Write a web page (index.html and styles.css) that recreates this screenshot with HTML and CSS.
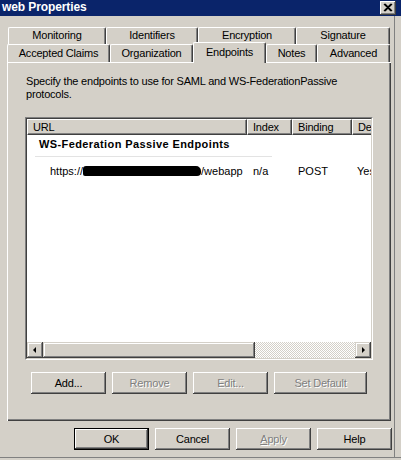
FILE: index.html
```html
<!DOCTYPE html>
<html>
<head>
<meta charset="utf-8">
<title>web Properties</title>
<link rel="stylesheet" href="styles.css">
</head>
<body>
<div class="window">
  <div class="titlebar">
    <span class="title">web Properties</span>
    <span class="close"><svg width="16" height="14" viewBox="0 0 16 14"><path d="M4 3 L11 10 M5 3 L12 10 M11 3 L4 10 M12 3 L5 10" stroke="#000" stroke-width="1.2" fill="none"/></svg></span>
  </div>
  <div class="tabs">
    <div class="tabrow row1">
      <div class="tab t-mon">Monitoring</div>
      <div class="tab t-ide">Identifiers</div>
      <div class="tab t-enc">Encryption</div>
      <div class="tab t-sig">Signature</div>
    </div>
    <div class="tabrow row2">
      <div class="tab t-acc">Accepted Claims</div>
      <div class="tab t-org">Organization</div>
      <div class="tab t-end selected">Endpoints</div>
      <div class="tab t-not">Notes</div>
      <div class="tab t-adv">Advanced</div>
    </div>
  </div>
  <div class="panel">
    <p class="desc">Specify the endpoints to use for SAML and WS-FederationPassive<br>protocols.</p>
    <div class="list">
      <div class="list-in">
        <div class="lv-header">
          <div class="col c-url">URL</div>
          <div class="col c-idx">Index</div>
          <div class="col c-bind">Binding</div>
          <div class="col c-def">Default</div>
        </div>
        <div class="lv-body">
          <div class="group">WS-Federation Passive Endpoints</div>
          <div class="group-line"></div>
          <div class="row">
            <div class="cell c-url url-cell">https://<span class="redact"></span>/webapp</div>
            <div class="cell c-idx">n/a</div>
            <div class="cell c-bind">POST</div>
            <div class="cell c-def">Yes</div>
          </div>
        </div>
        <div class="hscroll">
          <div class="sb-btn"><svg width="14" height="14" viewBox="0 0 14 14"><polygon points="5,7 8,4 8,10" fill="#000"/></svg></div>
          <div class="sb-thumb"></div>
          <div class="sb-track"></div>
          <div class="sb-btn"><svg width="14" height="14" viewBox="0 0 14 14"><polygon points="6,4 9,7 6,10" fill="#000"/></svg></div>
        </div>
      </div>
    </div>
    <div class="btnrow">
      <div class="btn">Add...</div>
      <div class="btn disabled">Remove</div>
      <div class="btn disabled">Edit...</div>
      <div class="btn disabled wide">Set Default</div>
    </div>
  </div>
  <div class="dlg-buttons">
    <div class="btn default">OK</div>
    <div class="btn">Cancel</div>
    <div class="btn disabled"><u>A</u>pply</div>
    <div class="btn">Help</div>
  </div>
</div>
</body>
</html>
```
FILE: styles.css
```css
html, body {
  margin: 0;
  padding: 0;
  background: #d4d0c8;
}
body {
  font-family: "Liberation Sans", Arial, sans-serif;
  font-size: 11px;
  letter-spacing: -0.2px;
  color: #000;
}
.window {
  position: relative;
  width: 401px;
  height: 460px;
  background: #d4d0c8;
  box-sizing: border-box;
  box-shadow: inset 0 -2px #d4d0c8, inset 0 -3px #808080, inset -6px 0 #d4d0c8, inset -7px 0 #808080;
  overflow: hidden;
}
.titlebar {
  display: flex;
  align-items: flex-start;
  height: 16px;
  background: #0a246a;
  color: #fff;
}
.title {
  padding-left: 2px;
  font-weight: bold;
  font-size: 12px;
  letter-spacing: -0.1px;
  line-height: 15px;
}
.close {
  margin-left: auto;
  margin-right: 5px;
  margin-top: 1px;
  width: 16px;
  height: 14px;
  background: #d4d0c8;
  box-shadow: inset -1px -1px #404040, inset 1px 1px #fff, inset -2px -2px #808080;
  display: flex;
}
.tabs {
  margin-top: 11px;
  margin-left: 7px;
  width: 384px;
}
.tabrow {
  display: flex;
  align-items: flex-start;
}
.row1 {
  padding-left: 1px;
  height: 17px;
}
.row2 {
  height: 18px;
}
.tab {
  box-sizing: border-box;
  flex-shrink: 0;
  background: #d4d0c8;
  border-top: 1px solid #fff;
  border-left: 1px solid #fff;
  border-right: 1px solid #404040;
  box-shadow: inset -1px 0 #808080;
  border-radius: 2px 2px 0 0;
  text-align: center;
  white-space: nowrap;
}
.row1 .tab {
  height: 17px;
  line-height: 15px;
}
.row2 .tab {
  height: 18px;
  line-height: 16px;
}
.row2 .tab.selected {
  position: relative;
  z-index: 1;
  height: 21px;
  margin-top: -2px;
  margin-bottom: -1px;
  padding-top: 1px;
}
.t-mon { width: 98px; }
.t-ide { width: 92px; }
.t-enc { width: 98px; }
.t-sig { width: 94px; }
.t-acc { width: 103px; }
.t-org { width: 83px; }
.t-end { width: 73px; }
.t-not { width: 51px; }
.t-adv { width: 73px; }

.panel {
  box-sizing: border-box;
  margin-left: 7px;
  width: 384px;
  height: 359px;
  padding: 13px 0 0 19px;
  box-shadow: inset 1px 1px #fff, inset -1px -1px #404040, inset -2px -2px #808080;
}
.desc {
  margin: 0;
  line-height: 13px;
}
.list {
  box-sizing: border-box;
  margin-top: 16px;
  margin-left: -1px;
  width: 348px;
  height: 243px;
  border: 1px solid;
  border-color: #808080 #fff #fff #808080;
}
.list-in {
  box-sizing: border-box;
  height: 100%;
  border: 1px solid;
  border-color: #404040 #d4d0c8 #d4d0c8 #404040;
  background: #fff;
  display: flex;
  flex-direction: column;
  overflow: hidden;
}
.lv-header {
  display: flex;
  height: 16px;
  flex-shrink: 0;
}
.col {
  box-sizing: border-box;
  flex-shrink: 0;
  height: 16px;
  background: #d4d0c8;
  border-top: 1px solid #fff;
  border-left: 1px solid #fff;
  border-right: 1px solid #404040;
  border-bottom: 1px solid #404040;
  box-shadow: inset -1px -1px #808080;
  line-height: 14px;
  padding-left: 5px;
  white-space: nowrap;
  overflow: hidden;
}
.c-url { width: 220px; }
.c-idx { width: 45px; }
.c-bind { width: 60px; }
.c-def { width: 60px; }
.lv-body {
  flex: 1;
  padding-top: 3px;
}
.group {
  padding-left: 12px;
  font-weight: bold;
  letter-spacing: 0.4px;
  line-height: 13px;
}
.group-line {
  margin-top: 5px;
  margin-left: 8px;
  width: 237px;
  height: 1px;
  background: #e3e3e3;
}
.row {
  display: flex;
  margin-top: 8px;
  line-height: 13px;
  letter-spacing: 0;
  white-space: nowrap;
}
.cell {
  box-sizing: border-box;
  flex-shrink: 0;
  padding-left: 6px;
}
.cell.c-def { padding-left: 5px; }
.url-cell { padding-left: 23px; }
.redact {
  display: inline-block;
  width: 118px;
  height: 10px;
  background: #000;
  vertical-align: -1px;
  border-radius: 3px 5px 4px 2px;
}
.hscroll {
  display: flex;
  height: 16px;
  flex-shrink: 0;
}
.sb-btn, .sb-thumb {
  box-sizing: border-box;
  height: 16px;
  background: #d4d0c8;
  box-shadow: inset -1px -1px #404040, inset 1px 1px #d4d0c8, inset -2px -2px #808080, inset 2px 2px #fff;
  flex-shrink: 0;
}
.sb-btn {
  width: 16px;
  display: flex;
  padding: 1px;
}
.sb-thumb {
  width: 212px;
}
.sb-track {
  flex: 1;
  background: repeating-conic-gradient(#d4d0c8 0 25%, #fff 0 50%) 0 0 / 2px 2px;
}
.btnrow {
  display: flex;
  gap: 6px;
  margin-top: 12px;
  margin-left: 5px;
}
.btn {
  box-sizing: border-box;
  width: 75px;
  height: 22px;
  background: #d4d0c8;
  box-shadow: inset -1px -1px #404040, inset 1px 1px #fff, inset -2px -2px #808080, inset 2px 2px #d4d0c8;
  text-align: center;
  line-height: 22px;
  flex-shrink: 0;
}
.btn.wide { width: 93px; }
.btn.disabled {
  color: #808080;
  text-shadow: 1px 1px #fff;
}
.btn.default {
  box-shadow: inset 0 0 0 1px #000, inset -2px -2px #404040, inset 2px 2px #fff, inset -3px -3px #808080;
}
.dlg-buttons {
  display: flex;
  gap: 6px;
  margin-top: 7px;
  margin-left: 74px;
}
```
